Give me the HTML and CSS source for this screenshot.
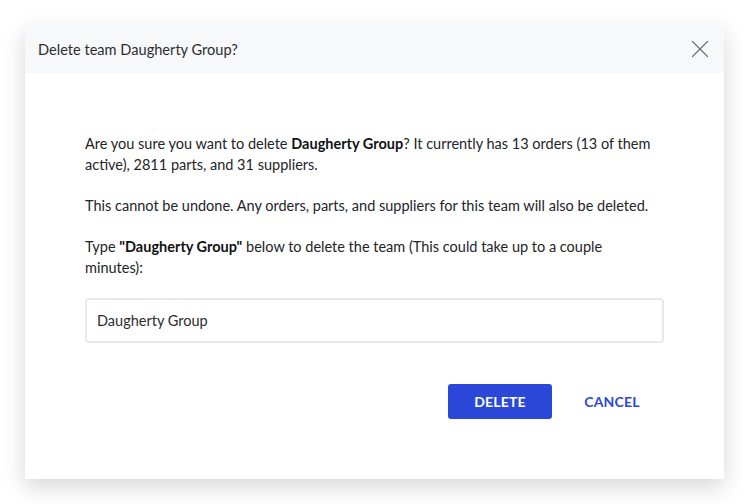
FILE: index.html
```html
<!DOCTYPE html>
<html lang="en">
<head>
<meta charset="utf-8">
<title>Delete team</title>
<link rel="stylesheet" href="styles.css">
</head>
<body>
<div class="modal" role="dialog" aria-labelledby="modal-title">
  <header class="modal-header">
    <h2 id="modal-title" class="modal-title">Delete team Daugherty Group?</h2>
    <button class="close-btn" aria-label="Close">
      <svg width="18" height="18" viewBox="0 0 18 18" fill="none" stroke="#6b6d72" stroke-width="1.2" stroke-linecap="round">
        <path d="M1.5 1.5 L16.5 16.5 M16.5 1.5 L1.5 16.5"/>
      </svg>
    </button>
  </header>
  <div class="modal-body">
    <p>Are you sure you want to delete <strong>Daugherty Group</strong>? It currently has 13 orders (13 of them active), 2811 parts, and 31 suppliers.</p>
    <p>This cannot be undone. Any orders, parts, and suppliers for this team will also be deleted.</p>
    <p>Type <strong>"Daugherty Group"</strong> below to delete the team (This could take up to a couple minutes):</p>
    <input class="confirm-input" type="text" value="Daugherty Group">
    <div class="actions">
      <button class="btn btn-primary">DELETE</button>
      <button class="btn btn-text">CANCEL</button>
    </div>
  </div>
</div>
</body>
</html>
```
FILE: styles.css
```css
* { box-sizing: border-box; }

html, body {
  margin: 0;
  background: #ffffff;
}

body {
  padding: 25px;
  font-family: Lato, "Open Sans", sans-serif;
  color: #232428;
}

.modal {
  width: 699px;
  height: 454px;
  background: #ffffff;
  box-shadow: 0 8px 22px rgba(0, 0, 0, 0.16);
  display: flex;
  flex-direction: column;
}

.modal-header {
  height: 48px;
  background: #f7f8fa;
  display: flex;
  align-items: center;
  justify-content: space-between;
  padding: 0 15px 0 13px;
}

.modal-title {
  margin: 0;
  font-size: 14.6px;
  font-weight: 400;
  color: #2c2d31;
}

.close-btn {
  background: none;
  border: 0;
  padding: 0;
  width: 18px;
  height: 18px;
  display: flex;
}

.modal-body {
  padding: 60px 60px 0 60px;
  font-size: 14.5px;
  line-height: 21px;
}

.modal-body p {
  max-width: 568px;
  margin: 0 0 20px 0;
}

.modal-body strong {
  font-weight: 700;
  color: #111214;
}

.confirm-input {
  display: block;
  width: 100%;
  height: 45px;
  border: 2px solid #e8e9ec;
  border-radius: 4px;
  padding: 0 10px;
  font-family: inherit;
  font-size: 14.5px;
  color: #2c2d31;
  outline: none;
}

.actions {
  display: flex;
  justify-content: flex-end;
  gap: 8px;
  margin-top: 41px;
}

.btn {
  min-width: 104px;
  height: 35px;
  border: 0;
  border-radius: 3px;
  font-family: inherit;
  font-size: 14px;
  font-weight: 700;
  letter-spacing: 0.2px;
  cursor: pointer;
}

.btn-primary {
  background: #2b47d7;
  color: #ffffff;
}

.btn-text {
  background: transparent;
  color: #2b47d7;
}
```
